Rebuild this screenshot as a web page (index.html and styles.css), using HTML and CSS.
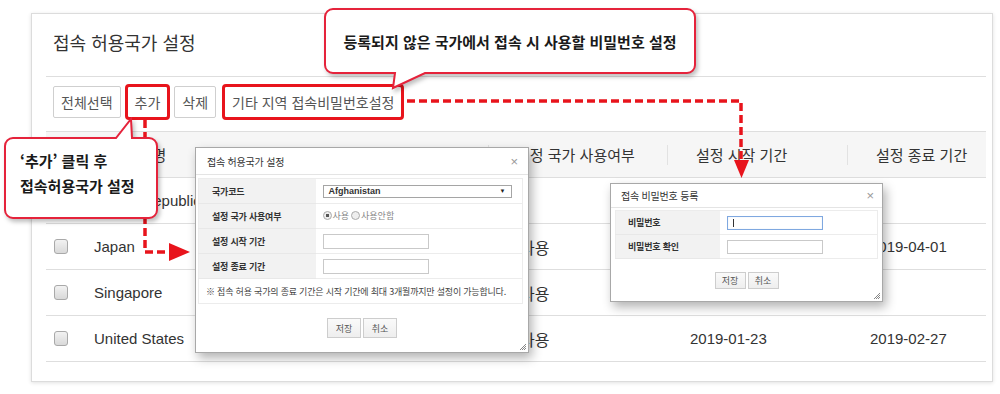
FILE: index.html
```html
<!DOCTYPE html>
<html lang="ko">
<head>
  <meta charset="UTF-8">
  <title>접속 허용국가 설정</title>
  <link rel="stylesheet" href="styles.css">
</head>
<body>
  <div class="panel">
    <h2 class="panel-title">접속 허용국가 설정</h2>

    <div class="toolbar">
      <button class="btn">전체선택</button>
      <button class="btn mark">추가</button>
      <button class="btn">삭제</button>
      <button class="btn mark wide">기타 지역 접속비밀번호설정</button>
    </div>

    <table class="grid">
      <colgroup>
        <col class="c-check">
        <col class="c-name">
        <col class="c-use">
        <col class="c-start">
        <col class="c-end">
      </colgroup>
      <thead>
        <tr>
          <th></th>
          <th class="th-name">국가명</th>
          <th class="th-use">설정 국가 사용여부</th>
          <th class="th-date">설정 시작 기간</th>
          <th class="th-date">설정 종료 기간</th>
        </tr>
      </thead>
      <tbody>
        <tr>
          <td><span class="check"></span></td>
          <td class="name">Korea, Republic of</td>
          <td class="use"></td>
          <td class="date"></td>
          <td class="date"></td>
        </tr>
        <tr>
          <td><span class="check"></span></td>
          <td class="name">Japan</td>
          <td class="use">사용</td>
          <td class="date">2019-03-01</td>
          <td class="date">2019-04-01</td>
        </tr>
        <tr>
          <td><span class="check"></span></td>
          <td class="name">Singapore</td>
          <td class="use">사용</td>
          <td class="date"></td>
          <td class="date"></td>
        </tr>
        <tr>
          <td><span class="check"></span></td>
          <td class="name">United States</td>
          <td class="use">사용</td>
          <td class="date">2019-01-23</td>
          <td class="date">2019-02-27</td>
        </tr>
      </tbody>
    </table>
  </div>

  <!-- 안내용 점선 화살표 -->
  <svg class="guides" width="1000" height="394" viewBox="0 0 1000 394">
    <path d="M407 101 H741 V161" />
    <polygon points="734,160 749,160 741.5,178" />
    <path d="M145 120 V252 H170" />
    <polygon points="169,243 169,261 190,252" />
  </svg>

  <div class="callout callout-top">
    <svg class="callout-bg" width="372" height="82" viewBox="0 0 372 82">
      <path d="M9 1 H363 A8 8 0 0 1 371 9 V57 A8 8 0 0 1 363 65 H101 L69 80 L71 65 H9 A8 8 0 0 1 1 57 V9 A8 8 0 0 1 9 1 Z" />
    </svg>
    <div class="callout-text">등록되지 않은 국가에서 접속 시 사용할 비밀번호 설정</div>
  </div>

  <div class="callout callout-left">
    <svg class="callout-bg" width="155" height="103" viewBox="0 0 155 103">
      <path d="M9 21 H112 L127 2 L128 21 H145 A8 8 0 0 1 153 29 V93 A8 8 0 0 1 145 101 H9 A8 8 0 0 1 1 93 V29 A8 8 0 0 1 9 21 Z" />
    </svg>
    <div class="callout-text">‘추가’ 클릭 후<br>접속허용국가 설정</div>
  </div>

  <!-- 접속 허용국가 설정 팝업 -->
  <div class="dialog dialog-country">
    <div class="dialog-head">
      <span>접속 허용국가 설정</span>
      <span class="dialog-close">×</span>
    </div>
    <table class="form">
      <tr>
        <th>국가코드</th>
        <td><div class="select">Afghanistan<span class="caret">▼</span></div></td>
      </tr>
      <tr>
        <th>설정 국가 사용여부</th>
        <td><span class="radio on">사용</span><span class="radio">사용안함</span></td>
      </tr>
      <tr>
        <th>설정 시작 기간</th>
        <td><span class="field"></span></td>
      </tr>
      <tr>
        <th>설정 종료 기간</th>
        <td><span class="field"></span></td>
      </tr>
      <tr>
        <td colspan="2" class="notice">※ 접속 허용 국가의 종료 기간은 시작 기간에 최대 3개월까지만 설정이 가능합니다.</td>
      </tr>
    </table>
    <div class="dialog-btns">
      <button class="dbtn">저장</button>
      <button class="dbtn">취소</button>
    </div>
    <svg class="grip" width="6" height="6" viewBox="0 0 6 6">
      <path d="M6 0 L0 6 M6 2 L2 6 M6 4 L4 6" />
    </svg>
  </div>

  <!-- 접속 비밀번호 등록 팝업 -->
  <div class="dialog dialog-pass">
    <div class="dialog-head">
      <span>접속 비밀번호 등록</span>
      <span class="dialog-close">×</span>
    </div>
    <table class="form">
      <tr>
        <th>비밀번호</th>
        <td><span class="field focus"></span></td>
      </tr>
      <tr>
        <th>비밀번호 확인</th>
        <td><span class="field"></span></td>
      </tr>
    </table>
    <div class="dialog-btns">
      <button class="dbtn">저장</button>
      <button class="dbtn">취소</button>
    </div>
    <svg class="grip" width="6" height="6" viewBox="0 0 6 6">
      <path d="M6 0 L0 6 M6 2 L2 6 M6 4 L4 6" />
    </svg>
  </div>
</body>
</html>
```

FILE: styles.css
```css
:root {
  --red: #e8141c;
  --callout: #e5233b;
  --line: #dedede;
  --text: #333;
  --gray: #555;
}

* {
  margin: 0;
  padding: 0;
  box-sizing: border-box;
}

body {
  position: relative;
  width: 1000px;
  height: 394px;
  overflow: hidden;
  padding: 13px 7px 0 31px;
  font-family: "Liberation Sans", "Noto Sans CJK KR", sans-serif;
  color: var(--text);
  background: #fff;
}

.panel {
  height: 369px;
  border: 1px solid #dcdcdc;
  box-shadow: 0 1px 4px rgba(0,0,0,0.12);
  padding: 0 6px 0 14px;
}

.panel-title {
  height: 62px;
  padding: 16px 0 0 7px;
  font-family: "Noto Sans CJK KR", sans-serif;
  font-size: 18px;
  font-weight: 400;
  line-height: 24px;
  color: var(--text);
}

.toolbar {
  display: flex;
  height: 55px;
  padding: 9px 0 0 7px;
  border-top: 1px solid var(--line);
}

.btn {
  height: 32px;
  padding: 0 7px;
  margin-right: 6px;
  border: 1px solid #cfcfcf;
  border-radius: 2px;
  background: #fff;
  font-family: "Noto Sans CJK KR", sans-serif;
  font-size: 14px;
  color: var(--gray);
}

.btn.mark {
  outline: 3px solid var(--red);
  outline-offset: -1px;
}

.btn.wide {
  margin-left: 2px;
}

/* 목록 */
.grid {
  width: 940px;
  border-collapse: collapse;
  table-layout: fixed;
}

.c-check { width: 34px; }
.c-name { width: 408px; }
.c-use { width: 179px; }
.c-start { width: 180px; }
.c-end { width: 139px; }

.grid th {
  position: relative;
  height: 46px;
  background: #f6f6f6;
  border-top: 1px solid var(--line);
  border-bottom: 1px solid var(--line);
  font-family: "Noto Sans CJK KR", sans-serif;
  font-size: 15px;
  font-weight: 400;
  text-align: left;
  white-space: nowrap;
}

.grid th + th + th::before {
  content: '';
  position: absolute;
  left: 0;
  top: 13px;
  width: 1px;
  height: 20px;
  background: #e2e2e2;
}

.grid .th-name { padding-left: 45px; }
.grid .th-use { padding-left: 28px; }
.grid .th-date { padding-left: 29px; }

.grid td {
  height: 46px;
  border-bottom: 1px solid var(--line);
  font-size: 15px;
  white-space: nowrap;
}

.grid td:first-child {
  padding-left: 8px;
}

.check {
  display: block;
  width: 14px;
  height: 15px;
  border: 1px solid #a9a9a9;
  border-radius: 3px;
  background: linear-gradient(#f2f2f2, #d9d9d9);
}

.grid .name { padding-left: 14px; }
.grid .use {
  padding-left: 32px;
  font-family: "Noto Sans CJK KR", sans-serif;
  font-size: 16px;
}
.grid .date { padding-left: 23px; }

/* 점선 */
.guides {
  position: absolute;
  left: 0;
  top: 0;
  pointer-events: none;
}

.guides path {
  fill: none;
  stroke: var(--red);
  stroke-width: 3.5;
  stroke-dasharray: 8 4;
}

.guides polygon {
  fill: var(--red);
}

/* 말풍선 */
.callout {
  position: absolute;
}

.callout-top {
  left: 324px;
  top: 8px;
  width: 372px;
  height: 82px;
}

.callout-left {
  left: 4px;
  top: 117px;
  width: 155px;
  height: 103px;
}

.callout-bg {
  position: absolute;
  left: 0;
  top: 0;
  filter: drop-shadow(2px 3px 2px rgba(0,0,0,0.25));
}

.callout-bg path {
  fill: #fff;
  stroke: var(--callout);
  stroke-width: 2;
}

.callout-text {
  position: relative;
  font-family: "Noto Sans CJK KR", sans-serif;
  font-weight: 700;
  color: #1a1a1a;
}

.callout-top .callout-text {
  display: flex;
  align-items: center;
  justify-content: center;
  height: 66px;
  font-size: 15px;
}

.callout-left .callout-text {
  padding: 31px 0 0 16px;
  font-size: 15px;
  line-height: 25px;
}

/* 팝업 */
.dialog {
  position: absolute;
  background: #fff;
  border: 1px solid #a8a8a8;
  box-shadow: 3px 5px 10px rgba(0,0,0,0.3);
  font-family: "Noto Sans CJK KR", "Liberation Sans", sans-serif;
  font-size: 9px;
  color: var(--text);
}

.dialog-country {
  left: 195px;
  top: 147px;
  width: 334px;
  height: 206px;
}

.dialog-pass {
  left: 610px;
  top: 183px;
  width: 273px;
  height: 119px;
}

.dialog-head {
  display: flex;
  align-items: center;
  justify-content: space-between;
  height: 27px;
  padding: 0 10px 0 11px;
  border-bottom: 1px solid #e4e4e4;
  font-size: 10px;
  letter-spacing: -0.2px;
}

.dialog-pass .dialog-head {
  height: 24px;
  padding: 0 8px 0 10px;
}

.dialog-close {
  font-family: "Liberation Sans", sans-serif;
  font-size: 13px;
  color: #999;
}

.form {
  border-collapse: collapse;
  table-layout: fixed;
  border: 1px solid #ececec;
}

.dialog-country .form {
  width: 325px;
  margin: 3px 0 0 2px;
}

.dialog-pass .form {
  width: 263px;
  margin: 2px 0 0 4px;
}

.form th {
  background: #f2f2f2;
  border-bottom: 1px solid #e8e8e8;
  font-weight: 700;
  text-align: left;
  letter-spacing: -0.2px;
  white-space: nowrap;
}

.form td {
  border-bottom: 1px solid #ececec;
  white-space: nowrap;
}

.dialog-country .form th {
  width: 117px;
  height: 25px;
  padding-left: 13px;
}

.dialog-country .form td {
  height: 25px;
  padding-left: 7px;
}

.dialog-pass .form th {
  width: 104px;
  height: 24px;
  padding-left: 12px;
}

.dialog-pass .form td {
  height: 24px;
  padding-left: 7px;
}

.form .notice {
  padding-left: 7px;
  font-size: 9px;
  letter-spacing: -0.2px;
  color: #444;
}

.select {
  display: flex;
  align-items: center;
  justify-content: space-between;
  width: 189px;
  height: 13px;
  padding: 0 5px;
  border: 1px solid #a5a5a5;
  font-family: "Liberation Sans", sans-serif;
  font-size: 9px;
  font-weight: 700;
  color: #333;
}

.caret {
  font-size: 6px;
  color: #222;
}

.radio {
  display: inline-flex;
  align-items: center;
  margin-right: 2px;
  color: #888;
}

.radio::before {
  content: '';
  width: 7px;
  height: 7px;
  margin-right: 1px;
  border: 1px solid #aaa;
  border-radius: 50%;
  background: #eee;
}

.radio.on::before {
  background: radial-gradient(circle, #555 0 1.5px, #eee 2px);
}

.field {
  display: block;
  height: 15px;
  border: 1px solid #c9c9c9;
}

.dialog-country .field {
  width: 106px;
}

.dialog-pass .field {
  width: 96px;
  height: 14px;
}

.field.focus {
  position: relative;
  border-color: #7fa8e0;
  box-shadow: inset 0 0 1px rgba(100,150,220,0.4);
}

.field.focus::after {
  content: '';
  position: absolute;
  left: 5px;
  top: 2px;
  width: 1px;
  height: 8px;
  background: #333;
}

.dialog-btns {
  display: flex;
  justify-content: center;
  gap: 2px;
}

.dialog-country .dialog-btns {
  margin-top: 14px;
}

.dialog-pass .dialog-btns {
  margin-top: 13px;
}

.dbtn {
  width: 34px;
  height: 20px;
  border: 1px solid #cdcdcd;
  background: linear-gradient(#fafafa, #eeeeee);
  font-family: "Noto Sans CJK KR", sans-serif;
  font-size: 9px;
  color: var(--gray);
}

.dialog-pass .dbtn {
  width: 31px;
  height: 17px;
}

.grip {
  position: absolute;
  right: 2px;
  bottom: 2px;
}

.grip path {
  stroke: #888;
  stroke-width: 1;
}
```
